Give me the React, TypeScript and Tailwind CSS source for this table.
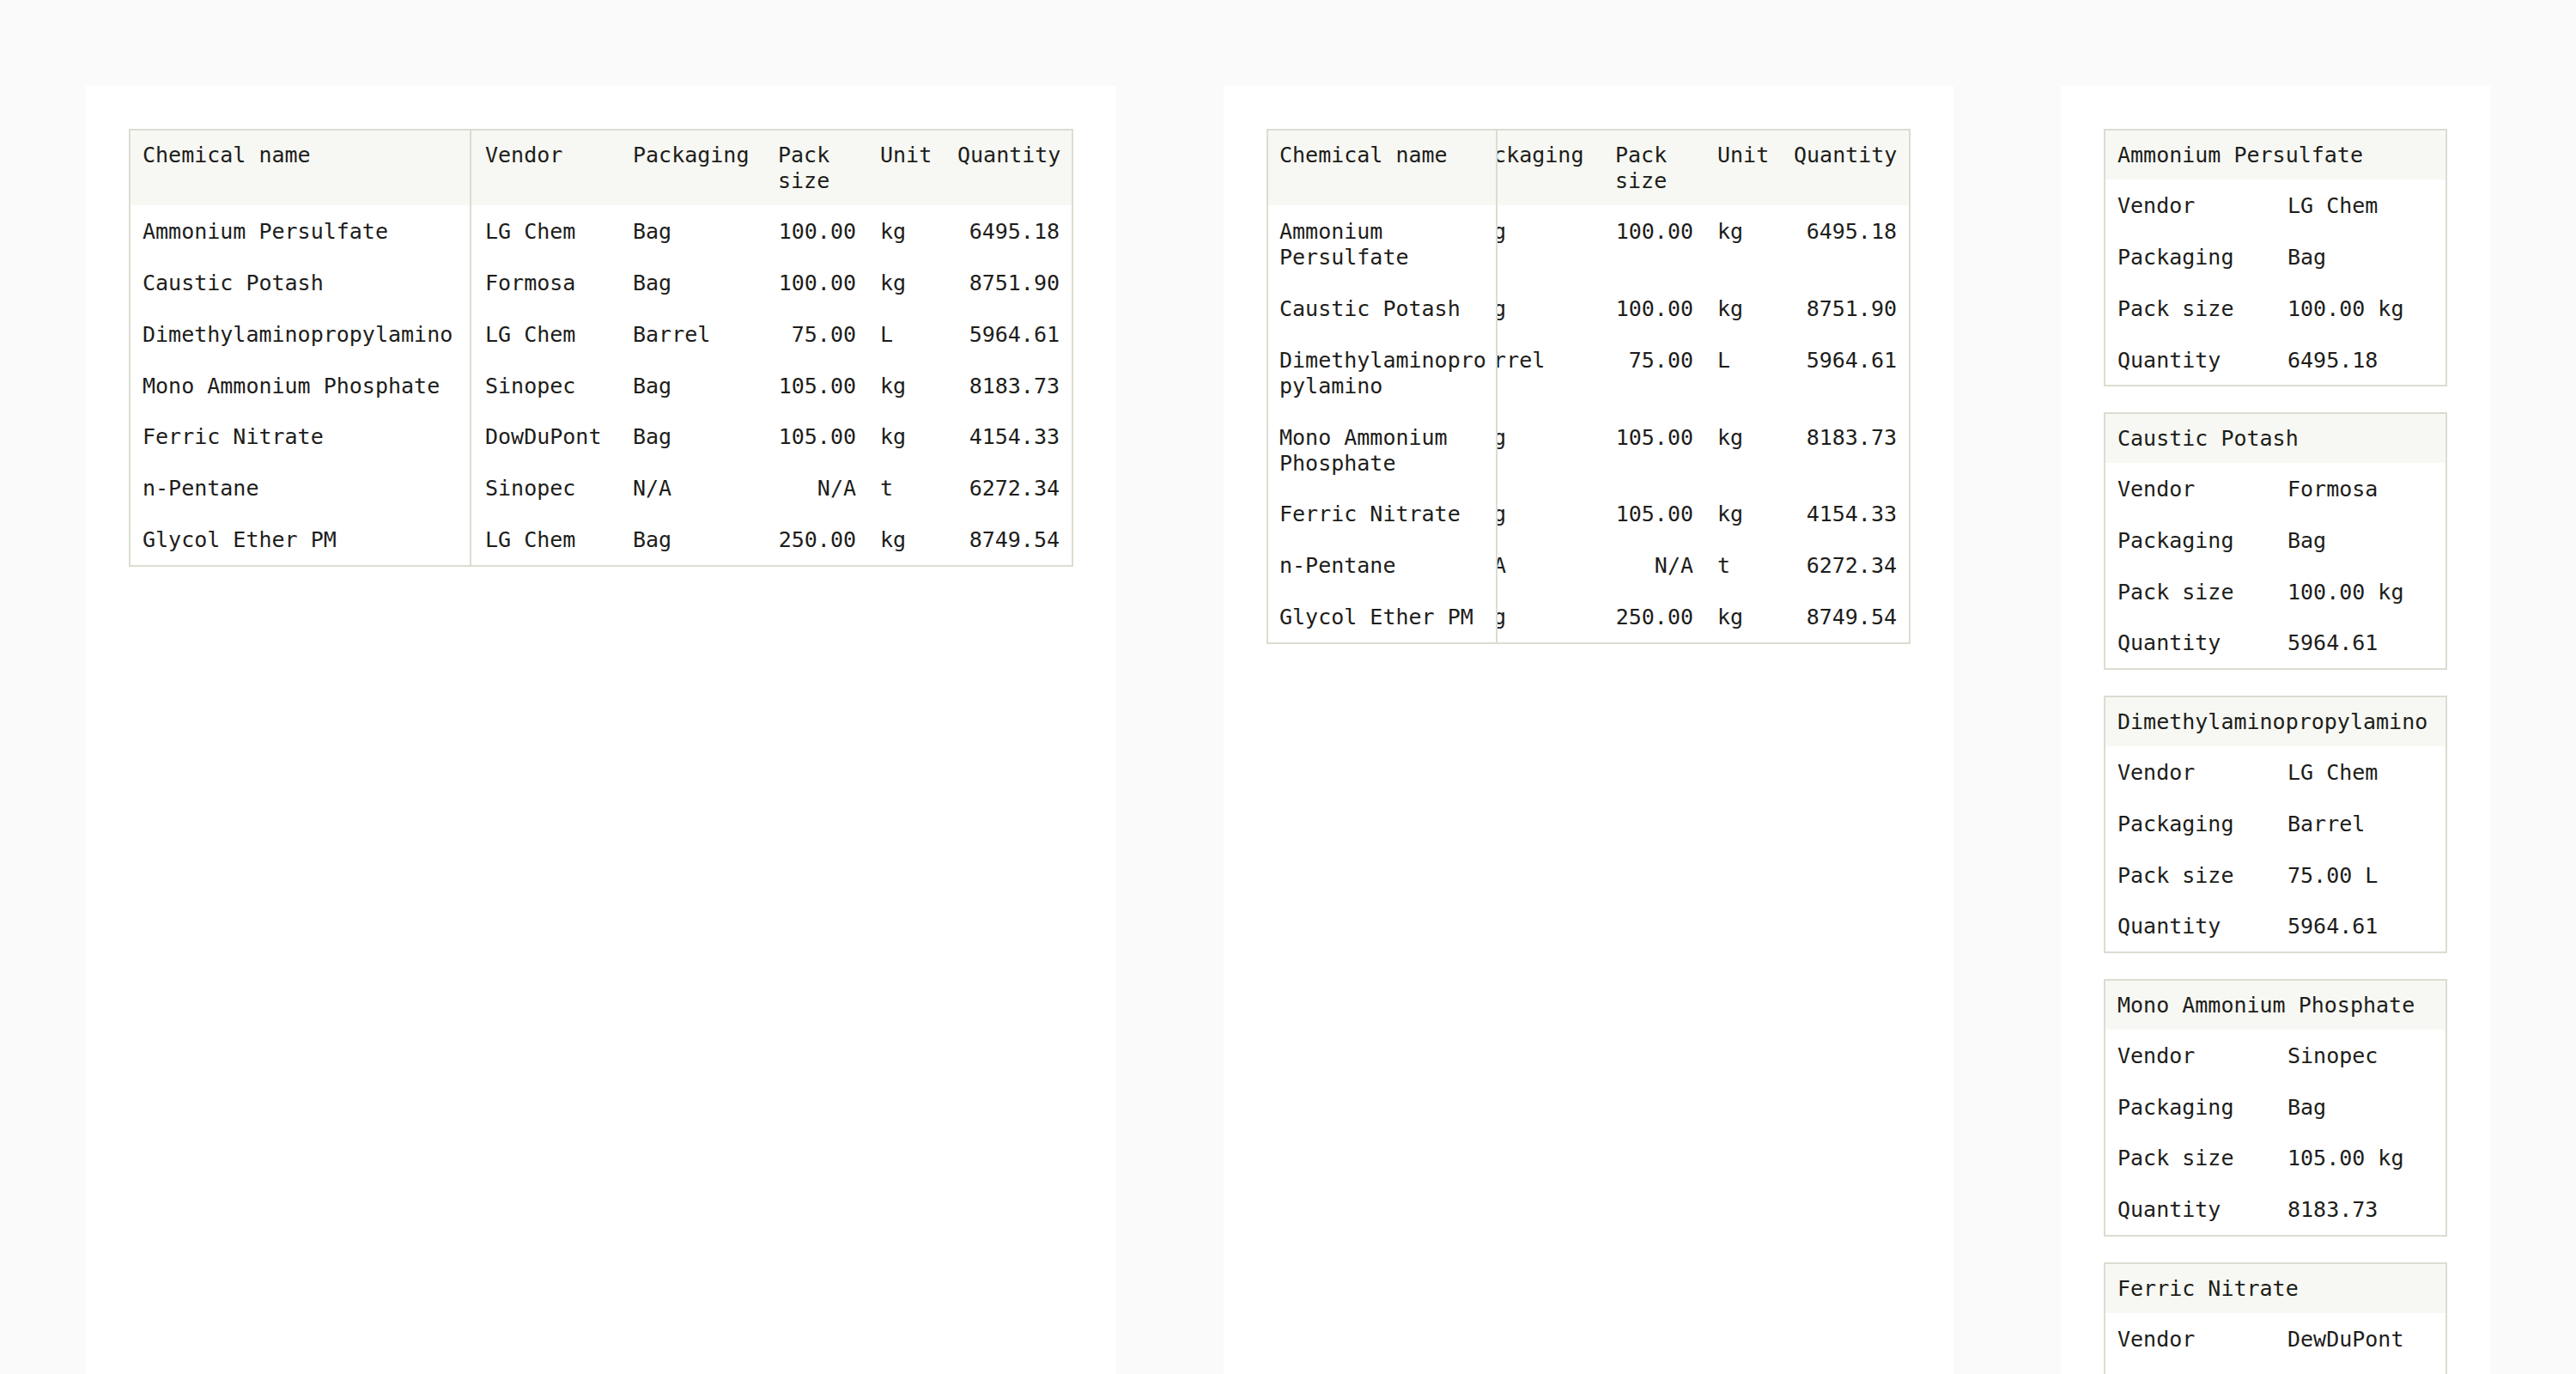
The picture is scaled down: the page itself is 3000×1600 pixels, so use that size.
import { useLayoutEffect, useRef } from "react";

type Chemical = {
  name: string;
  vendor: string;
  packaging: string;
  packSize: string;
  unit: string;
  quantity: string;
};

const chemicals: Chemical[] = [
  { name: "Ammonium Persulfate", vendor: "LG Chem", packaging: "Bag", packSize: "100.00", unit: "kg", quantity: "6495.18" },
  { name: "Caustic Potash", vendor: "Formosa", packaging: "Bag", packSize: "100.00", unit: "kg", quantity: "8751.90" },
  { name: "Dimethylaminopropylamino", vendor: "LG Chem", packaging: "Barrel", packSize: "75.00", unit: "L", quantity: "5964.61" },
  { name: "Mono Ammonium Phosphate", vendor: "Sinopec", packaging: "Bag", packSize: "105.00", unit: "kg", quantity: "8183.73" },
  { name: "Ferric Nitrate", vendor: "DowDuPont", packaging: "Bag", packSize: "105.00", unit: "kg", quantity: "4154.33" },
  { name: "n-Pentane", vendor: "Sinopec", packaging: "N/A", packSize: "N/A", unit: "t", quantity: "6272.34" },
  { name: "Glycol Ether PM", vendor: "LG Chem", packaging: "Bag", packSize: "250.00", unit: "kg", quantity: "8749.54" },
];

const cards = [
  { name: "Ammonium Persulfate", vendor: "LG Chem", packaging: "Bag", packSize: "100.00 kg", quantity: "6495.18" },
  { name: "Caustic Potash", vendor: "Formosa", packaging: "Bag", packSize: "100.00 kg", quantity: "5964.61" },
  { name: "Dimethylaminopropylamino", vendor: "LG Chem", packaging: "Barrel", packSize: "75.00 L", quantity: "5964.61" },
  { name: "Mono Ammonium Phosphate", vendor: "Sinopec", packaging: "Bag", packSize: "105.00 kg", quantity: "8183.73" },
  { name: "Ferric Nitrate", vendor: "DewDuPont", packaging: "Bag", packSize: "105.00 kg", quantity: "4154.33" },
  { name: "n-Pentane", vendor: "Sinopec", packaging: "N/A", packSize: "N/A", quantity: "6272.34" },
  { name: "Glycol Ether PM", vendor: "LG Chem", packaging: "Bag", packSize: "250.00 kg", quantity: "8749.54" },
];

const th = "px-[14px] pt-[14.4px] pb-[12.9px] text-left font-normal align-top bg-[#f7f8f3]";
const td = "px-[14px] pt-[15.9px] pb-[13.9px] align-top";

function WideTable() {
  return (
    <div className="border-2 border-[#dcdcd1]">
      <table className="w-full table-fixed border-separate border-spacing-0">
        <thead>
          <tr>
            <th className={`${th} w-[397px] border-r-2 border-[#dcdcd1]`}>Chemical name</th>
            <th className={`${th} w-[174px] pl-[16px]`}>Vendor</th>
            <th className={`${th} w-[169px]`}>Packaging</th>
            <th className={`${th} w-[119px]`}>Pack size</th>
            <th className={`${th} w-[90px]`}>Unit</th>
            <th className={`${th} w-[147px]`}>Quantity</th>
          </tr>
        </thead>
        <tbody>
          {chemicals.map((c) => (
            <tr key={c.name}>
              <td className={`${td} border-r-2 border-[#dcdcd1]`}>{c.name}</td>
              <td className={`${td} pl-[16px]`}>{c.vendor}</td>
              <td className={td}>{c.packaging}</td>
              <td className={`${td} text-right`}>{c.packSize}</td>
              <td className={td}>{c.unit}</td>
              <td className={`${td} text-right`}>{c.quantity}</td>
            </tr>
          ))}
        </tbody>
      </table>
    </div>
  );
}

function ScrolledTable() {
  const ref = useRef<HTMLDivElement>(null);

  // start scrolled all the way right, name column stays pinned
  useLayoutEffect(() => {
    if (ref.current) ref.current.scrollLeft = ref.current.scrollWidth;
  }, []);

  return (
    <div
      ref={ref}
      className="overflow-x-auto border-2 border-[#dcdcd1] [scrollbar-width:none] [&::-webkit-scrollbar]:hidden"
    >
      <table className="w-[956px] table-fixed border-separate border-spacing-0">
        <thead>
          <tr>
            <th className={`${th} sticky left-0 z-10 w-[267px] pl-[13px] pr-[11px] border-r-2 border-[#dcdcd1]`}>
              Chemical name
            </th>
            <th className={`${th} w-[161px]`}>Vendor</th>
            <th className={`${th} w-[172px]`}>Packaging</th>
            <th className={`${th} w-[119px]`}>Pack size</th>
            <th className={`${th} w-[89px]`}>Unit</th>
            <th className={`${th} w-[148px]`}>Quantity</th>
          </tr>
        </thead>
        <tbody>
          {chemicals.map((c) => (
            <tr key={c.name}>
              <td className={`${td} sticky left-0 z-10 bg-white pl-[13px] pr-[11px] border-r-2 border-[#dcdcd1] [overflow-wrap:anywhere]`}>
                {c.name}
              </td>
              <td className={td}>{c.vendor}</td>
              <td className={td}>{c.packaging}</td>
              <td className={`${td} text-right`}>{c.packSize}</td>
              <td className={td}>{c.unit}</td>
              <td className={`${td} text-right`}>{c.quantity}</td>
            </tr>
          ))}
        </tbody>
      </table>
    </div>
  );
}

function ChemicalCard({ card }: { card: (typeof cards)[number] }) {
  const fields = [
    ["Vendor", card.vendor],
    ["Packaging", card.packaging],
    ["Pack size", card.packSize],
    ["Quantity", card.quantity],
  ];
  return (
    <div className="border-2 border-[#dcdcd1]">
      <div className="bg-[#f7f8f3] px-[14px] pt-[14.4px] pb-[12.9px]">{card.name}</div>
      <dl>
        {fields.map(([label, value]) => (
          <div key={label} className="grid grid-cols-2">
            <dt className="px-[14px] pt-[15.9px] pb-[13.9px]">{label}</dt>
            <dd className="px-[14px] pt-[15.9px] pb-[13.9px]">{value}</dd>
          </div>
        ))}
      </dl>
    </div>
  );
}

export default function App() {
  return (
    <div className="min-h-screen bg-[#fafafa] flex gap-[125px] px-[100px] pt-[100px] font-['DejaVu_Sans_Mono',monospace] text-[25px] leading-[30px] text-[#1d1d1b]">
      <section className="w-[1200px] shrink-0 bg-white p-[50px]">
        <WideTable />
      </section>
      <section className="w-[850px] shrink-0 bg-white p-[50px]">
        <ScrolledTable />
      </section>
      <section className="w-[500px] shrink-0 bg-white p-[50px] flex flex-col gap-[29.5px]">
        {cards.map((card) => (
          <ChemicalCard key={card.name} card={card} />
        ))}
      </section>
    </div>
  );
}
